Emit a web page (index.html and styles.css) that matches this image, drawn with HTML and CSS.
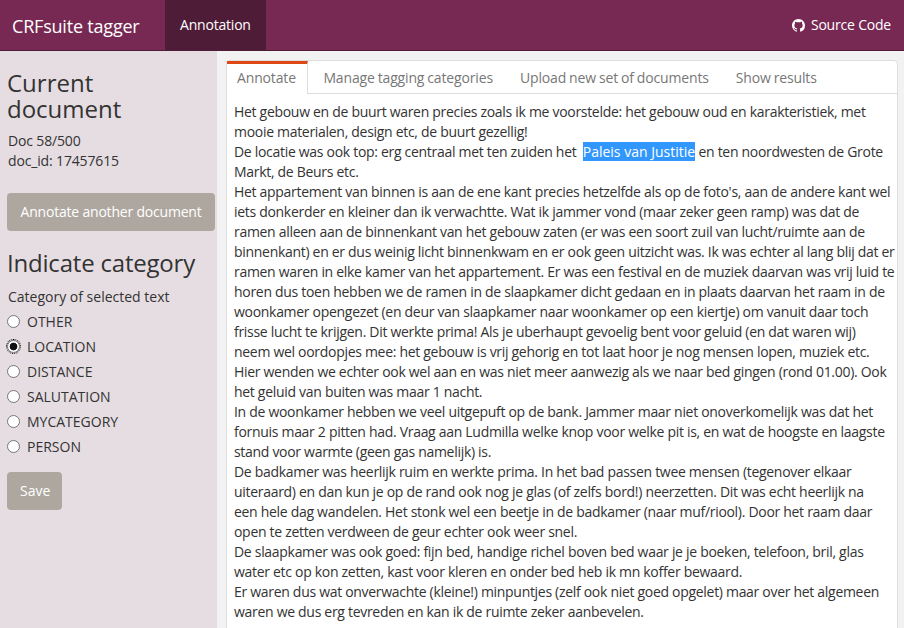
FILE: index.html
```html
<!DOCTYPE html>
<html lang="en">
<head>
	<meta charset="UTF-8">
	<title>CRFsuite tagger</title>
	<link rel="stylesheet" href="styles.css">
</head>
<body>
	<nav class="navbar">
		<span class="brand">CRFsuite tagger</span>
		<a class="nav-item active">Annotation</a>
		<a class="nav-source">
			<svg class="gh" viewBox="0 0 16 16" width="13" height="13"><path fill="#fff" d="M8 0C3.58 0 0 3.58 0 8c0 3.54 2.29 6.53 5.47 7.59.4.07.55-.17.55-.38 0-.19-.01-.82-.01-1.49-2.01.37-2.53-.49-2.69-.94-.09-.23-.48-.94-.82-1.13-.28-.15-.68-.52-.01-.53.63-.01 1.08.58 1.23.82.72 1.21 1.87.87 2.33.66.07-.52.28-.87.51-1.07-1.78-.2-3.64-.89-3.64-3.95 0-.87.31-1.59.82-2.15-.08-.2-.36-1.02.08-2.12 0 0 .67-.21 2.2.82.64-.18 1.32-.27 2-.27s1.36.09 2 .27c1.53-1.04 2.2-.82 2.2-.82.44 1.1.16 1.92.08 2.12.51.56.82 1.27.82 2.15 0 3.07-1.87 3.75-3.65 3.95.29.25.54.73.54 1.48 0 1.07-.01 1.93-.01 2.2 0 .21.15.46.55.38A8.01 8.01 0 0 0 16 8c0-4.42-3.58-8-8-8z"/></svg>
			Source Code
		</a>
	</nav>
	<div class="page">
		<aside class="sidebar">
			<h2>Current document</h2>
			<p class="doc-info">Doc 58/500<br>doc_id: 17457615</p>
			<button class="btn btn-wide">Annotate another document</button>
			<h2 class="heading-cat">Indicate category</h2>
			<p class="cat-label">Category of selected text</p>
			<label class="radio"><input type="radio" name="cat"> OTHER</label>
			<label class="radio"><input class="focused" type="radio" name="cat" checked> LOCATION</label>
			<label class="radio"><input type="radio" name="cat"> DISTANCE</label>
			<label class="radio"><input type="radio" name="cat"> SALUTATION</label>
			<label class="radio"><input type="radio" name="cat"> MYCATEGORY</label>
			<label class="radio"><input type="radio" name="cat"> PERSON</label>
			<button class="btn btn-save">Save</button>
		</aside>
		<main class="content">
			<div class="panel">
				<ul class="tabs">
					<li class="tab active">Annotate</li>
					<li class="tab">Manage tagging categories</li>
					<li class="tab">Upload new set of documents</li>
					<li class="tab">Show results</li>
				</ul>
				<div class="doc-text">
					Het gebouw en de buurt waren precies zoals ik me voorstelde: het gebouw oud en karakteristiek, met<br>
					mooie materialen, design etc, de buurt gezellig!<br>
					De locatie was ook top: erg centraal met ten zuiden het <span class="selected">Paleis van Justitie</span> en ten noordwesten de Grote<br>
					Markt, de Beurs etc.<br>
					Het appartement van binnen is aan de ene kant precies hetzelfde als op de foto's, aan de andere kant wel<br>
					iets donkerder en kleiner dan ik verwachtte. Wat ik jammer vond (maar zeker geen ramp) was dat de<br>
					ramen alleen aan de binnenkant van het gebouw zaten (er was een soort zuil van lucht/ruimte aan de<br>
					binnenkant) en er dus weinig licht binnenkwam en er ook geen uitzicht was. Ik was echter al lang blij dat er<br>
					ramen waren in elke kamer van het appartement. Er was een festival en de muziek daarvan was vrij luid te<br>
					horen dus toen hebben we de ramen in de slaapkamer dicht gedaan en in plaats daarvan het raam in de<br>
					woonkamer opengezet (en deur van slaapkamer naar woonkamer op een kiertje) om vanuit daar toch<br>
					frisse lucht te krijgen. Dit werkte prima! Als je uberhaupt gevoelig bent voor geluid (en dat waren wij)<br>
					neem wel oordopjes mee: het gebouw is vrij gehorig en tot laat hoor je nog mensen lopen, muziek etc.<br>
					Hier wenden we echter ook wel aan en was niet meer aanwezig als we naar bed gingen (rond 01.00). Ook<br>
					het geluid van buiten was maar 1 nacht.<br>
					In de woonkamer hebben we veel uitgepuft op de bank. Jammer maar niet onoverkomelijk was dat het<br>
					fornuis maar 2 pitten had. Vraag aan Ludmilla welke knop voor welke pit is, en wat de hoogste en laagste<br>
					stand voor warmte (geen gas namelijk) is.<br>
					De badkamer was heerlijk ruim en werkte prima. In het bad passen twee mensen (tegenover elkaar<br>
					uiteraard) en dan kun je op de rand ook nog je glas (of zelfs bord!) neerzetten. Dit was echt heerlijk na<br>
					een hele dag wandelen. Het stonk wel een beetje in de badkamer (naar muf/riool). Door het raam daar<br>
					open te zetten verdween de geur echter ook weer snel.<br>
					De slaapkamer was ook goed: fijn bed, handige richel boven bed waar je je boeken, telefoon, bril, glas<br>
					water etc op kon zetten, kast voor kleren en onder bed heb ik mn koffer bewaard.<br>
					Er waren dus wat onverwachte (kleine!) minpuntjes (zelf ook niet goed opgelet) maar over het algemeen<br>
					waren we dus erg tevreden en kan ik de ruimte zeker aanbevelen.
				</div>
			</div>
		</main>
	</div>
</body>
</html>
```
FILE: styles.css
```css
* {
	box-sizing: border-box;
}
html, body {
	margin: 0;
	height: 100%;
	overflow: hidden;
}
body {
	font-family: "Open Sans", "Noto Sans", sans-serif;
	font-size: 14px;
	line-height: 20px;
	color: #333;
	display: flex;
	flex-direction: column;
}
.navbar {
	flex: none;
	height: 51px;
	background: #772953;
	border-bottom: 1px solid #4f1c38;
	color: #fff;
	display: flex;
	align-items: stretch;
}
.brand {
	font-size: 18px;
	letter-spacing: -0.2px;
	padding: 15px 25px 15px 12px;
	width: 165px;
	white-space: nowrap;
	line-height: 22px;
}
.nav-item {
	padding: 15px;
	width: 101px;
	white-space: nowrap;
	background: #4f1c38;
	letter-spacing: -0.2px;
}
.nav-source {
	margin-left: auto;
	padding: 15px 13px 15px 15px;
	display: flex;
	align-items: center;
	gap: 6px;
	white-space: nowrap;
	letter-spacing: -0.2px;
}
.page {
	flex: 1;
	display: flex;
	min-height: 0;
}
.sidebar {
	flex: none;
	width: 217px;
	background: #e6dde2;
	padding: 19px 2px 0 7px;
}
h2 {
	font-weight: 400;
	font-size: 24px;
	line-height: 26px;
	margin: 0;
	width: 140px;
}
.doc-info {
	margin: 9px 0 0;
	padding-left: 1px;
	letter-spacing: -0.15px;
}
.btn {
	display: block;
	border: 0;
	border-radius: 4px;
	background: #aea79f;
	color: #fff;
	font: inherit;
	height: 38px;
	padding: 0 13px;
	white-space: nowrap;
}
.btn-wide {
	width: 208px;
	margin-top: 22px;
	letter-spacing: -0.2px;
}
.heading-cat {
	width: auto;
	margin-top: 19px;
	white-space: nowrap;
	letter-spacing: -0.2px;
}
.cat-label {
	margin: 11px 0 2px;
	padding-left: 1px;
}
.radio {
	display: flex;
	align-items: center;
	height: 25px;
	gap: 7px;
}
.radio input {
	appearance: none;
	margin: 0;
	width: 13px;
	height: 13px;
	border: 1px solid #767676;
	border-radius: 50%;
	background: #fff;
}
.radio input:checked {
	background: radial-gradient(circle, #111 0, #111 3.5px, #fff 4.2px);
}
.radio input.focused {
	outline: 1px dotted #000;
	outline-offset: 0;
}
.btn-save {
	width: 55px;
	margin-top: 13px;
}
.content {
	flex: 1;
	background: #f2f2f2;
	padding: 9px 6px 0 9px;
	min-width: 0;
	overflow: hidden;
}
.panel {
	background: #fff;
	border: 1px solid #ddd;
	border-radius: 4px;
}
.tabs {
	list-style: none;
	margin: 0;
	padding: 0;
	display: flex;
	height: 33px;
	border-bottom: 1px solid #ddd;
	letter-spacing: -0.15px;
	word-spacing: -0.5px;
}
.tab {
	padding: 7px 13.5px 0;
	color: #777;
	white-space: nowrap;
}
.tab.active {
	border-top: 3px solid #dd4814;
	border-right: 1px solid #ddd;
	background: #fff;
	height: 33px;
	padding: 4px 11px 0 10px;
	margin-right: 2px;
}
.doc-text {
	padding: 8px 8px 20px 7px;
	white-space: nowrap;
	letter-spacing: -0.3px;
}
.selected {
	background: #3297fd;
	color: #fff;
	letter-spacing: 0;
	margin-left: 3px;
}
```
